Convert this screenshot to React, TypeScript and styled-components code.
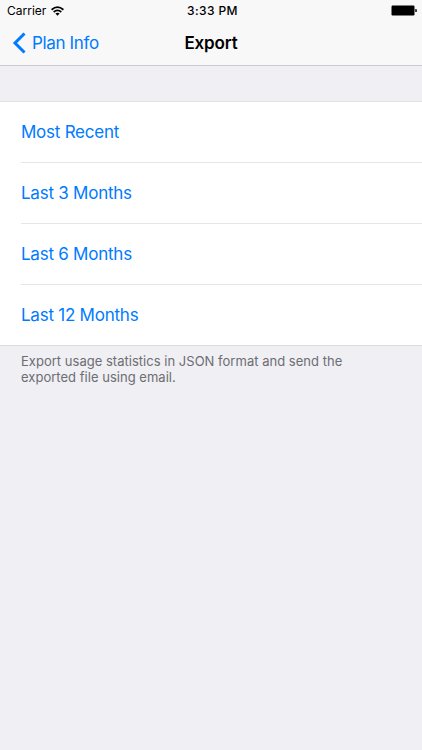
import React from "react";
import styled, { createGlobalStyle } from "styled-components";

const GlobalStyle = createGlobalStyle`
  body { margin: 0; background: #efeff4; font-family: Inter, "Liberation Sans", sans-serif; }
`;

const Screen = styled.div`
  width: 422px;
  height: 750px;
  overflow: hidden;
  background: #efeff4;
`;

const Header = styled.header`
  box-sizing: border-box;
  height: 66px;
  background: #f8f8f8;
  border-bottom: 1px solid #c9c9cf;
`;

const StatusBar = styled.div`
  display: grid;
  grid-template-columns: 1fr auto 1fr;
  align-items: center;
  height: 21px;
  padding: 0 5px 0 7px;
  box-sizing: border-box;
  font-size: 12px;
  color: #000;
`;

const Carrier = styled.div`
  display: flex;
  align-items: center;
  gap: 5px;
`;

const Time = styled.span`
  font-weight: 500;
  font-size: 12px;
  letter-spacing: 0.4px;
  padding-left: 1px;
`;

const Battery = styled.svg`
  justify-self: end;
`;

const NavBar = styled.nav`
  display: grid;
  grid-template-columns: 1fr auto 1fr;
  align-items: center;
  height: 44px;
  padding: 0 12px;
`;

const BackButton = styled.a`
  display: flex;
  align-items: center;
  gap: 6px;
  font-size: 17px;
  letter-spacing: -0.35px;
  color: #007aff;
`;

const Title = styled.h1`
  margin: 0;
  font-size: 17px;
  font-weight: 600;
  letter-spacing: -0.15px;
  color: #000;
`;

const List = styled.ul`
  list-style: none;
  margin: 35px 0 0;
  padding: 0 0 0 21px;
  background: #fff;
  border-top: 1px solid #e2e2e6;
  border-bottom: 1px solid #dcdcdf;
`;

const Option = styled.li`
  display: flex;
  align-items: center;
  box-sizing: border-box;
  height: 61px;
  font-size: 17px;
  letter-spacing: -0.24px;
  color: #007aff;
  &:first-child { height: 60px; }
  & + & { border-top: 1px solid #e6e6e8; }
`;

const Footnote = styled.p`
  margin: 7px 21px 0;
  font-size: 13px;
  line-height: 16px;
  letter-spacing: 0.02px;
  color: #6d6d72;
`;

const options = ["Most Recent", "Last 3 Months", "Last 6 Months", "Last 12 Months"];

export default function App() {
  return (
    <Screen>
      <GlobalStyle />
      <Header>
        <StatusBar>
          <Carrier>
            <span>Carrier</span>
            <svg width="13" height="10" viewBox="0 0 13 10" fill="none" stroke="#000" strokeWidth="1.8">
              <path d="M.6 3.7Q6.5-1.5 12.4 3.7M2.7 6Q6.5 2.7 10.3 6" />
              <path d="M6.5 9.7 4.4 7.6Q6.5 5.9 8.6 7.6Z" fill="#000" stroke="none" />
            </svg>
          </Carrier>
          <Time>3:33 PM</Time>
          <Battery width="26" height="11" viewBox="0 0 26 11">
            <rect x=".5" y=".5" width="23" height="10" rx="1.2" />
            <path d="M24.3 3.9h.6q.9 0 .9.9v1.4q0 .9-.9.9h-.6Z" />
          </Battery>
        </StatusBar>
        <NavBar>
          <BackButton>
            <svg width="14" height="22" viewBox="0 0 14 22" fill="none" stroke="#007aff" strokeWidth="3">
              <path d="M12.5 1.5 3 11l9.5 9.5" />
            </svg>
            <span>Plan Info</span>
          </BackButton>
          <Title>Export</Title>
        </NavBar>
      </Header>
      <List>
        {options.map((label) => (
          <Option key={label}>{label}</Option>
        ))}
      </List>
      <Footnote>
        Export usage statistics in JSON format and send the
        <br />
        exported file using email.
      </Footnote>
    </Screen>
  );
}
